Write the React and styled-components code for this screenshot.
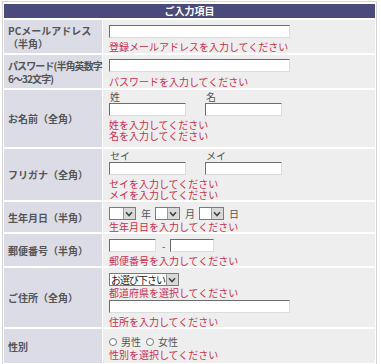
import styled, { createGlobalStyle } from "styled-components";

const Global = createGlobalStyle`
  body {
    margin: 0;
    padding: 2px;
    background: #fff;
    font-family: "Noto Sans CJK JP", "DejaVu Sans", sans-serif;
    font-size: 10px;
    line-height: 11px;
  }
`;

const Table = styled.table`
  width: 375px;
  border-collapse: separate;
  border-spacing: 1px 2px;
  border: 1px solid #d4d4d4;
  background: #fff;
  margin-top: -1px;
`;

const Head = styled.th`
  background: #4a4a7c;
  color: #fff;
  font-size: 10px;
  font-weight: bold;
  height: 14px;
  padding: 0;
  line-height: 14px;
`;

const Label = styled.th`
  width: 93px;
  height: ${(p) => p.$h}px;
  background: #dcdce6;
  color: #555;
  font-weight: bold;
  font-size: 10px;
  text-align: left;
  padding: 0 0 0 4px;
  line-height: 13px;
  white-space: nowrap;
  letter-spacing: ${(p) => (p.$tight ? "-0.9px" : "0")};
`;

const Value = styled.td`
  background: #eeeeee;
  padding: ${(p) => p.$pad || "4px 6px 0"};
  vertical-align: top;
  line-height: 11px;
  color: #555;
`;

const Error = styled.div`
  color: #cc2e4f;
  font-size: 10px;
  line-height: 11px;
  margin-top: ${(p) => p.$mt || 0}px;
  white-space: nowrap;
`;

const Input = styled.div`
  box-sizing: border-box;
  width: ${(p) => p.$w || 180}px;
  height: 13px;
  background: #fff;
  border-top: 1px solid #6d6d6d;
  border-left: 1px solid #6d6d6d;
  border-right: 1px solid #dcdcdc;
  border-bottom: 1px solid #dcdcdc;
  margin-top: ${(p) => p.$mt || 0}px;
`;

const Row = styled.div`
  display: flex;
  align-items: center;
  gap: ${(p) => p.$gap || 4}px;
  height: 13px;
`;

const Pair = styled.div`
  display: flex;
  gap: 19px;
`;

const Field = styled.div`
  display: flex;
  flex-direction: column;
  gap: 1px;
`;

const Small = styled.span`
  color: #555;
  font-size: 10px;
  line-height: 11px;
  padding-left: 1px;
`;

const SelectBox = styled.div`
  box-sizing: border-box;
  display: inline-flex;
  height: 13px;
  border: 1px solid #7b7b7b;
  background: #fff;
  color: #222;
  font-size: 10px;
  line-height: 11px;
`;

const SelectText = styled.span`
  flex: none;
  min-width: ${(p) => p.$w || 11}px;
  padding: 0 1px;
  white-space: nowrap;
  letter-spacing: -1px;
`;

const Arrow = styled.span`
  flex: none;
  width: 11px;
  height: 11px;
  background: #d9d9d9;
  border-left: 1px solid #9a9a9a;
  display: flex;
  align-items: center;
  justify-content: center;
`;

const Radio = styled.span`
  display: inline-block;
  box-sizing: border-box;
  width: 8px;
  height: 8px;
  border: 1px solid #777;
  border-radius: 50%;
  background: #fff;
  margin-left: ${(p) => p.$ml || 0}px;
`;

function Select({ w, text }) {
  return (
    <SelectBox>
      <SelectText $w={w}>{text}</SelectText>
      <Arrow>
        <svg width="8" height="6" viewBox="0 0 8 6">
          <path d="M1 1.2 L4 4.5 L7 1.2" fill="none" stroke="#444" strokeWidth="1.6" />
        </svg>
      </Arrow>
    </SelectBox>
  );
}

export default function App() {
  return (
    <>
      <Global />
      <Table>
        <tbody>
          <tr>
            <Head colSpan={2}>ご入力項目</Head>
          </tr>
          <tr>
            <Label $h={33}>
              PCメールアドレス
              <br />
              （半角）
            </Label>
            <Value $pad="5px 6px 0">
              <Input $w={181} />
              <Error $mt={3}>登録メールアドレスを入力してください</Error>
            </Value>
          </tr>
          <tr>
            <Label $h={33} $tight>
              パスワード(半角英数字
              <br />
              6～32文字)
            </Label>
            <Value $pad="4px 6px 0">
              <Input $w={181} />
              <Error $mt={4}>パスワードを入力してください</Error>
            </Value>
          </tr>
          <tr>
            <Label $h={57}>お名前（全角）</Label>
            <Value $pad="1px 6px 0">
              <Pair>
                <Field>
                  <Small>姓</Small>
                  <Input $w={77} />
                </Field>
                <Field>
                  <Small>名</Small>
                  <Input $w={77} />
                </Field>
              </Pair>
              <Error $mt={3}>姓を入力してください</Error>
              <Error>名を入力してください</Error>
            </Value>
          </tr>
          <tr>
            <Label $h={49}>フリガナ（全角）</Label>
            <Value $pad="1px 6px 0">
              <Pair>
                <Field>
                  <Small>セイ</Small>
                  <Input $w={77} />
                </Field>
                <Field>
                  <Small>メイ</Small>
                  <Input $w={77} />
                </Field>
              </Pair>
              <Error $mt={3}>セイを入力してください</Error>
              <Error>メイを入力してください</Error>
            </Value>
          </tr>
          <tr>
            <Label $h={30}>生年月日（半角）</Label>
            <Value $pad="5px 6px 0">
              <Row $gap={4}>
                <Select w={11} />
                <Small>年</Small>
                <Select w={9} />
                <Small>月</Small>
                <Select w={9} />
                <Small>日</Small>
              </Row>
              <Error $mt={1}>生年月日を入力してください</Error>
            </Value>
          </tr>
          <tr>
            <Label $h={31}>郵便番号（半角）</Label>
            <Value $pad="5px 6px 0">
              <Row $gap={5}>
                <Input $w={47} />
                <Small>-</Small>
                <Input $w={44} />
              </Row>
              <Error $mt={3}>郵便番号を入力してください</Error>
            </Value>
          </tr>
          <tr>
            <Label $h={51}>ご住所（全角）</Label>
            <Value $pad="5px 6px 0">
              <Row>
                <Select w={54} text="お選び下さい" />
              </Row>
              <Error $mt={1}>都道府県を選択してください</Error>
              <Input $w={181} $mt={2} />
              <Error $mt={3}>住所を入力してください</Error>
            </Value>
          </tr>
          <tr>
            <Label $h={34}>性別</Label>
            <Value $pad="6px 6px 0">
              <Row $gap={3}>
                <Radio />
                <Small>男性</Small>
                <Radio $ml={2} />
                <Small>女性</Small>
              </Row>
              <Error $mt={1}>性別を選択してください</Error>
            </Value>
          </tr>
        </tbody>
      </Table>
    </>
  );
}
